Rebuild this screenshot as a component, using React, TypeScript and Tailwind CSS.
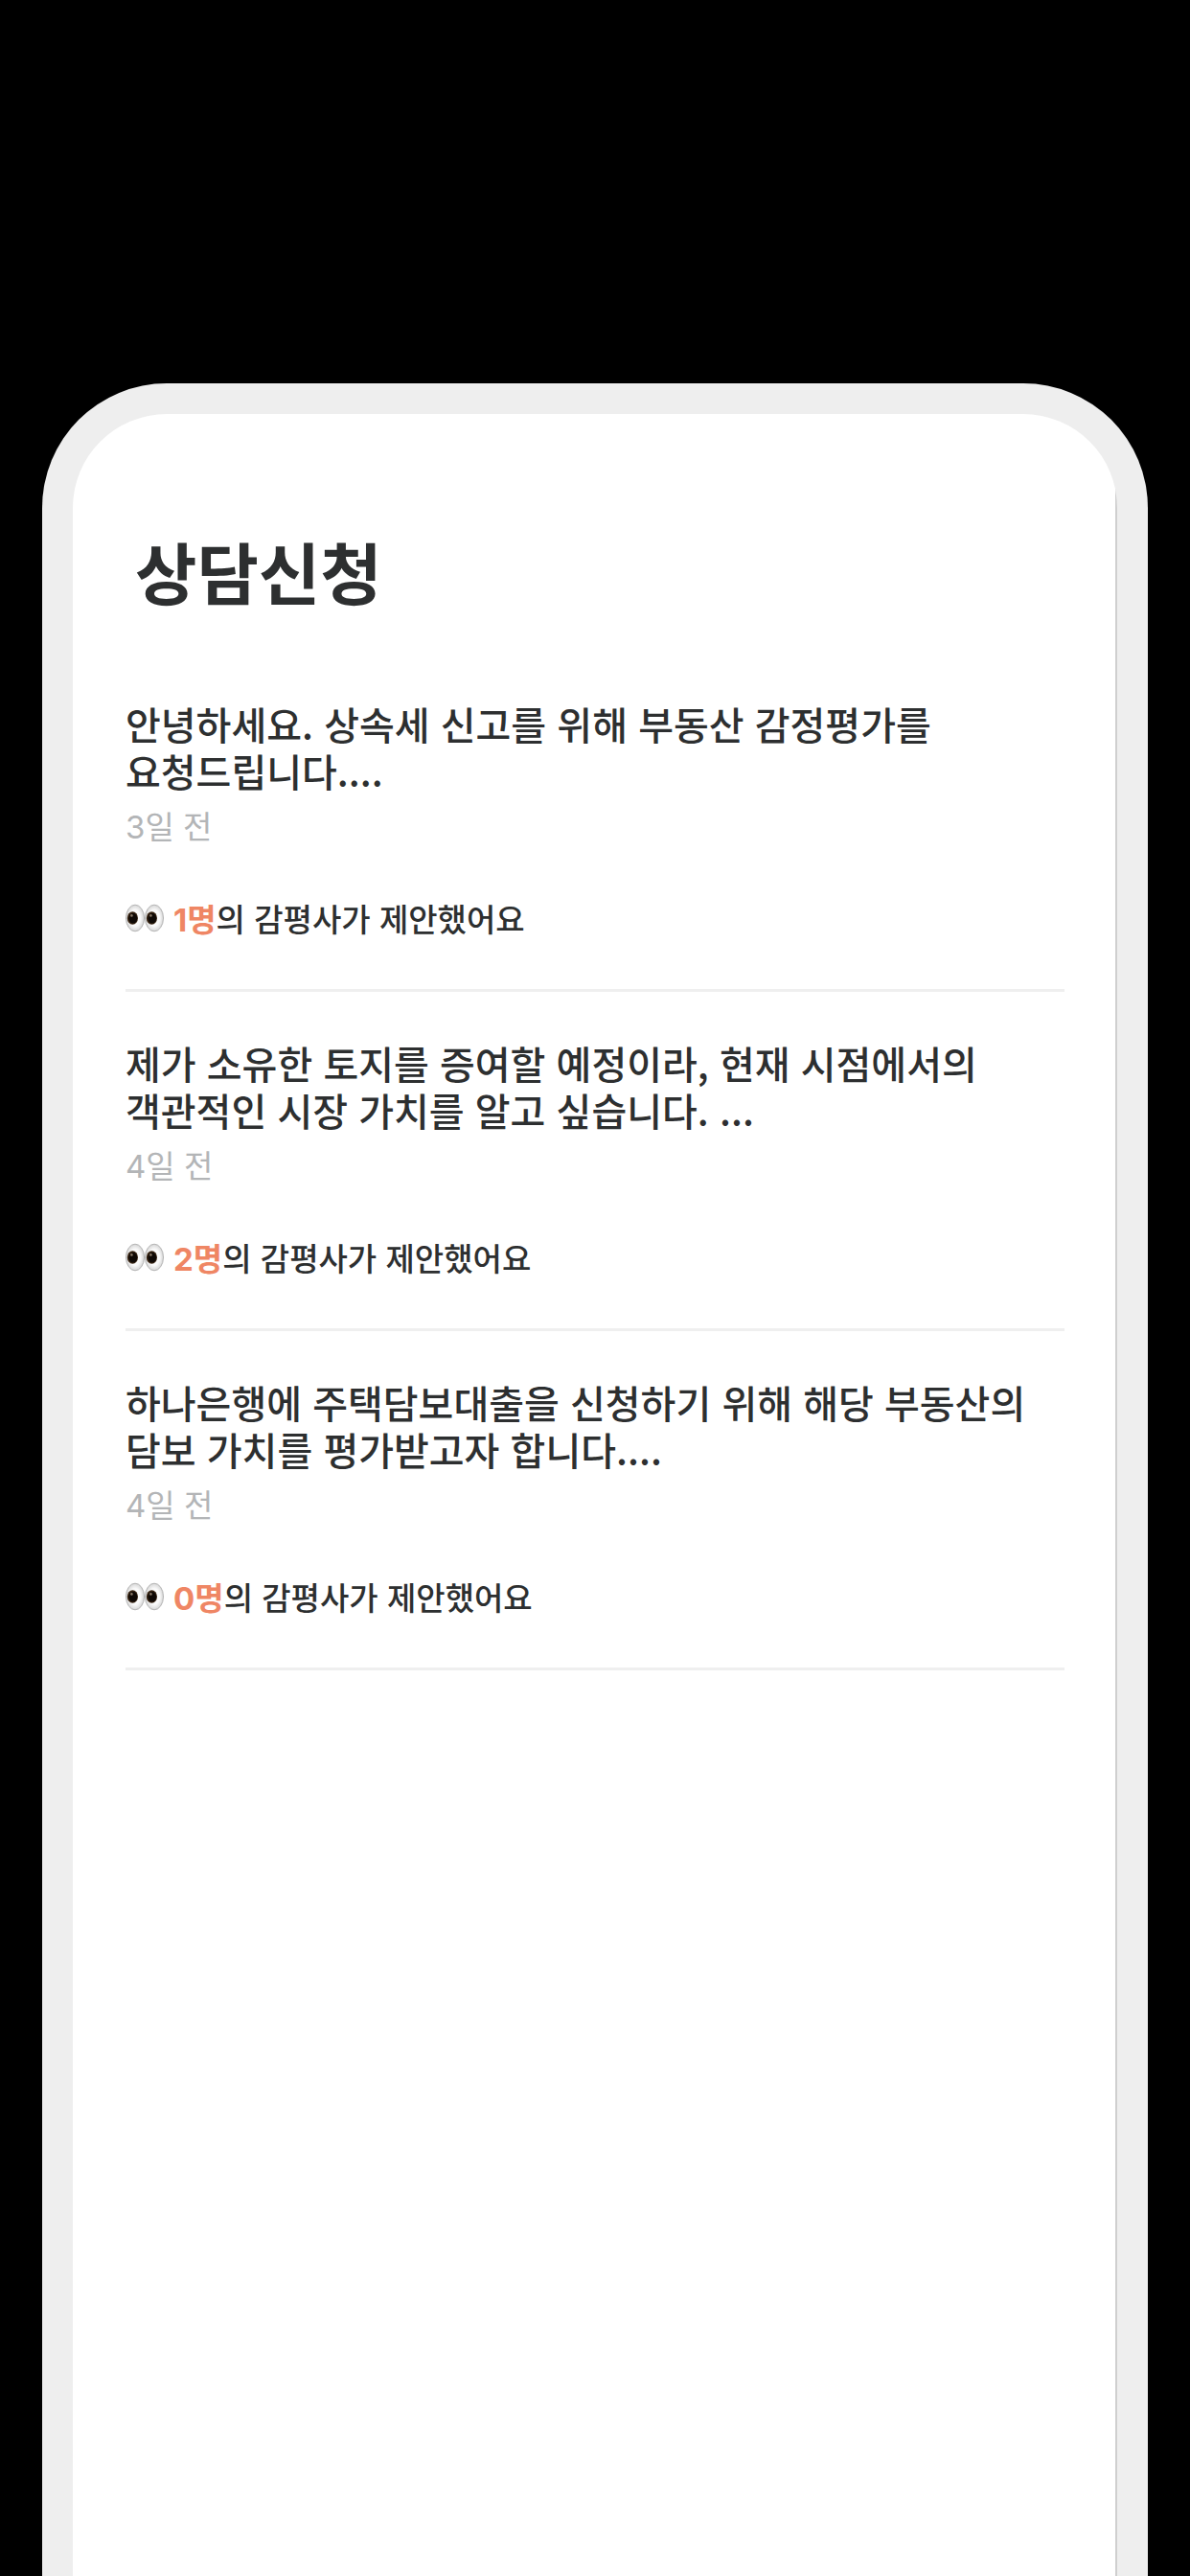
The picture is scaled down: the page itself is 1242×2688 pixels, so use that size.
type Request = {
  id: number;
  text: string;
  date: string;
  count: number;
};

const requests: Request[] = [
  { id: 1, text: '안녕하세요. 상속세 신고를 위해 부동산 감정평가를 요청드립니다....', date: '3일 전', count: 1 },
  { id: 2, text: '제가 소유한 토지를 증여할 예정이라, 현재 시점에서의 객관적인 시장 가치를 알고 싶습니다. ...', date: '4일 전', count: 2 },
  { id: 3, text: '하나은행에 주택담보대출을 신청하기 위해 해당 부동산의 담보 가치를 평가받고자 합니다....', date: '4일 전', count: 0 },
];

function Eye({ cx }: { cx: number }) {
  return (
    <g>
      <ellipse cx={cx} cy="15" rx="9.5" ry="13.8" fill="url(#eyeWhite)" stroke="#b4b4b4" strokeWidth="1" />
      <ellipse cx={cx - 2.6} cy="15" rx="5.6" ry="6.8" fill="#3a2614" />
      <ellipse cx={cx - 2.2} cy="15.2" rx="4.4" ry="5.4" fill="#0f0905" />
      <circle cx={cx - 3.6} cy="12.4" r="1.3" fill="#8a7a68" />
    </g>
  );
}

function Eyes() {
  return (
    <svg className="h-[30px] w-10 shrink-0" viewBox="0 0 40 30" aria-hidden="true">
      <defs>
        <radialGradient id="eyeWhite">
          <stop offset="0.6" stopColor="#fafafa" />
          <stop offset="1" stopColor="#d6d6d6" />
        </radialGradient>
      </defs>
      <Eye cx={10} />
      <Eye cx={30} />
    </svg>
  );
}

function RequestItem({ text, date, count }: Request) {
  return (
    <li className="border-b-3 border-[#efefef] pb-[52px] pt-[50px]">
      <p className="break-keep text-[40px] font-medium leading-[49px]">{text}</p>
      <p className="mt-3 font-['Inter','Noto_Sans_CJK_KR',sans-serif] text-[33px] leading-[44px] text-[#b3b5b7]">{date}</p>
      <div className="mt-[51px] flex items-center gap-[10px] text-[33px] font-medium leading-[44px]">
        <Eyes />
        <p>
          <strong className="font-['Inter','Noto_Sans_CJK_KR',sans-serif] font-bold leading-none text-[#ef8664]">{count}명</strong>의 감평사가 제안했어요
        </p>
      </div>
    </li>
  );
}

export default function App() {
  return (
    <div className="flex min-h-screen flex-col bg-black px-11 pt-[400px] font-['Noto_Sans_CJK_KR',sans-serif] text-[#2d2f30]" lang="ko">
      <div className="flex flex-1 flex-col rounded-t-[130px] bg-[#eeeeee] px-8 pt-8">
        <div className="flex flex-1 flex-col overflow-hidden rounded-t-[98px] bg-white">
          <main className="flex-1 border-r-2 border-[#cfcfcf] pb-16 pl-[55px] pr-[53px] pt-[122px]">
            <h1 className="mb-[43px] pl-[10px] text-[70px] font-bold leading-[84px]">상담신청</h1>
            <ul>
              {requests.map((request) => (
                <RequestItem key={request.id} {...request} />
              ))}
            </ul>
          </main>
        </div>
      </div>
    </div>
  );
}
